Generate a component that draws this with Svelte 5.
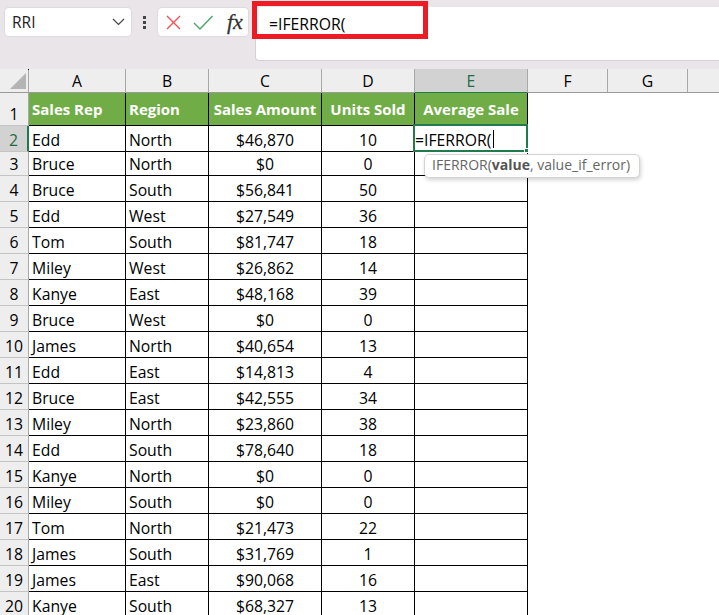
<script>
  const cols = ['A', 'B', 'C', 'D', 'E', 'F', 'G', ''];
  const heads = ['Sales Rep', 'Region', 'Sales Amount', 'Units Sold', 'Average Sale'];

  const rows = [
    ['Edd', 'North', '$46,870', 10],
    ['Bruce', 'North', '$0', 0],
    ['Bruce', 'South', '$56,841', 50],
    ['Edd', 'West', '$27,549', 36],
    ['Tom', 'South', '$81,747', 18],
    ['Miley', 'West', '$26,862', 14],
    ['Kanye', 'East', '$48,168', 39],
    ['Bruce', 'West', '$0', 0],
    ['James', 'North', '$40,654', 13],
    ['Edd', 'East', '$14,813', 4],
    ['Bruce', 'East', '$42,555', 34],
    ['Miley', 'North', '$23,860', 38],
    ['Edd', 'South', '$78,640', 18],
    ['Kanye', 'North', '$0', 0],
    ['Miley', 'South', '$0', 0],
    ['Tom', 'North', '$21,473', 22],
    ['James', 'South', '$31,769', 1],
    ['James', 'East', '$90,068', 16],
    ['Kanye', 'South', '$68,327', 13]
  ];
</script>

<div class="window">
  <div class="toolbar">
    <div class="namebox">
      <span>RRI</span>
      <svg width="13" height="8" viewBox="0 0 13 8"><path d="M1 1l5.5 5.5L12 1" fill="none" stroke="#444" stroke-width="1.2" /></svg>
    </div>
    <div class="dots"><i></i><i></i><i></i></div>
    <div class="actions">
      <svg width="15" height="15" viewBox="0 0 15 15"><path d="M1 1l13 13M14 1 1 14" fill="none" stroke="#f0524f" stroke-width="1.4" /></svg>
      <svg width="20" height="15" viewBox="0 0 20 15"><path d="M1 8l6 6L19.5 1" fill="none" stroke="#4aa564" stroke-width="1.4" /></svg>
      <span class="fx">fx</span>
    </div>
    <div class="formula">=IFERROR(</div>
    <div class="highlight"></div>
  </div>

  <div class="grid">
    <div class="corner"><svg width="16" height="16" viewBox="0 0 16 16"><path d="M16 0v16H0z" fill="#b4b4b4" /></svg></div>
    {#each cols as col, i}
      <div class="colhead" class:active={i === 4}>{col}</div>
    {/each}

    <div class="rowhead">1</div>
    {#each heads as head, i}
      <div class="cell title" class:left={i < 2}>{head}</div>
    {/each}
    <div class="blank"></div>
    <div class="blank"></div>
    <div class="blank"></div>

    {#each rows as row, r}
      <div class="rowhead" class:active={r === 0}>{r + 2}</div>
      <div class="cell left">{row[0]}</div>
      <div class="cell left">{row[1]}</div>
      <div class="cell">{row[2]}</div>
      <div class="cell">{row[3]}</div>
      <div class="cell"></div>
      <div class="blank"></div>
      <div class="blank"></div>
      <div class="blank"></div>
    {/each}

    <div class="editor">=IFERROR(<b class="caret"></b><i class="handle"></i></div>
    <div class="tip">IFERROR(<b>value</b>, value_if_error)</div>
  </div>
</div>

<style>
  :global(body) {
    margin: 0;
    background: #fff;
  }

  .window {
    width: 719px;
    height: 615px;
    overflow: hidden;
    font-family: 'Open Sans', 'Noto Sans', sans-serif;
    color: #000;
  }

  .toolbar {
    height: 69px;
    box-sizing: border-box;
    padding: 8px 0 0 5px;
    display: flex;
    align-items: flex-start;
    position: relative;
    background: #e9e5e9;
  }

  .namebox {
    width: 126px;
    height: 28px;
    box-sizing: border-box;
    padding: 0 6px 0 7px;
    display: flex;
    align-items: center;
    justify-content: space-between;
    background: #fff;
    border-radius: 4px;
    box-shadow: 0 0 0 1px #dedade;
    font-size: 15.5px;
    color: #222;
  }

  .dots {
    width: 27px;
    height: 28px;
    display: flex;
    flex-direction: column;
    align-items: center;
    justify-content: center;
    gap: 2px;
  }

  .dots i {
    width: 3px;
    height: 3px;
    background: #444;
  }

  .actions {
    width: 90px;
    height: 28px;
    box-sizing: border-box;
    padding-left: 8px;
    display: flex;
    align-items: center;
    gap: 12px;
    background: #fff;
    border-radius: 4px;
    box-shadow: 0 0 0 1px #dedade;
  }

  .fx {
    font-family: 'Liberation Serif', serif;
    font-style: italic;
    font-size: 22px;
    line-height: 1;
    color: #333;
    margin-left: 2px;
    -webkit-text-stroke: 0.3px #333;
  }

  .formula {
    width: 464px;
    height: 54px;
    margin: -1px 0 0 7px;
    box-sizing: border-box;
    padding: 6px 0 0 13px;
    background: #fff;
    border: 1px solid #d4d0d4;
    border-width: 0 0 1px 1px;
    border-radius: 4px 0 0 4px;
    font-size: 15.75px;
  }

  .highlight {
    position: absolute;
    left: 252px;
    top: 1px;
    width: 176px;
    height: 38px;
    box-sizing: border-box;
    border: 5px solid #ed1c24;
  }

  .grid {
    position: relative;
    display: grid;
    grid-template-columns: 29px 97px 83px 113px 93px 113px 80px 80px 32px;
    grid-template-rows: 24px 33px 26px 24px;
    grid-auto-rows: 26px;
    font-size: 15.75px;
  }

  .corner {
    position: relative;
    background: #eee;
    border-right: 1px solid #a8a8a8;
    border-bottom: 1px solid #9a9a9a;
    display: flex;
    align-items: flex-end;
    justify-content: flex-end;
    padding: 0 2px 3px 0;
    box-sizing: border-box;
  }

  .corner::before {
    content: '';
    position: absolute;
    top: 0;
    right: -1px;
    width: 1px;
    height: 1px;
    background: #000;
  }

  .colhead {
    background: #eee;
    border-right: 1px solid #a8a8a8;
    border-bottom: 1px solid #9a9a9a;
    display: flex;
    align-items: center;
    justify-content: center;
    box-sizing: border-box;
  }

  .colhead.active {
    background: #d2d2d2;
    color: #1f6b47;
    border-bottom-color: #1f7a4d;
  }

  .rowhead {
    background: #eee;
    border-right: 1px solid #a8a8a8;
    border-bottom: 1px solid #c4c4c4;
    display: flex;
    align-items: flex-end;
    justify-content: center;
    box-sizing: border-box;
    line-height: 22px;
  }

  .rowhead.active {
    background: #d2d2d2;
    color: #1f6b47;
    border-right: 2px solid #1f7a4d;
  }

  .cell {
    border-right: 1px solid #000;
    border-bottom: 1px solid #000;
    box-sizing: border-box;
    display: flex;
    align-items: flex-end;
    justify-content: center;
    line-height: 21px;
    white-space: nowrap;
    overflow: hidden;
  }

  .cell.left {
    justify-content: flex-start;
    padding-left: 3px;
  }

  .title {
    background: #70ad47;
    color: #fff;
    font-size: 15px;
    font-weight: 700;
    align-items: center;
    line-height: 1;
  }

  .editor {
    position: absolute;
    left: 413px;
    top: 55px;
    width: 115px;
    height: 28px;
    box-sizing: border-box;
    border: 2px solid #1f7a4d;
    background: #fff;
    display: flex;
    align-items: center;
    line-height: 1;
    padding-top: 5px;
  }

  .caret {
    width: 1px;
    height: 18px;
    background: #000;
    margin: -3px 0 0 2px;
  }

  .handle {
    position: absolute;
    right: -3px;
    bottom: -3px;
    width: 5px;
    height: 5px;
    background: #1f7a4d;
    border: 1px solid #fff;
    box-sizing: border-box;
  }

  .tip {
    position: absolute;
    left: 424px;
    top: 85px;
    height: 24px;
    box-sizing: border-box;
    padding: 0 9px 3px 7px;
    display: flex;
    align-items: center;
    white-space: pre;
    background: #fff;
    border: 1px solid #d4d4d4;
    border-radius: 5px;
    box-shadow: 1px 2px 4px rgba(0, 0, 0, 0.18);
    font-size: 14px;
    color: #666;
  }

  .tip b {
    color: #555;
  }
</style>
